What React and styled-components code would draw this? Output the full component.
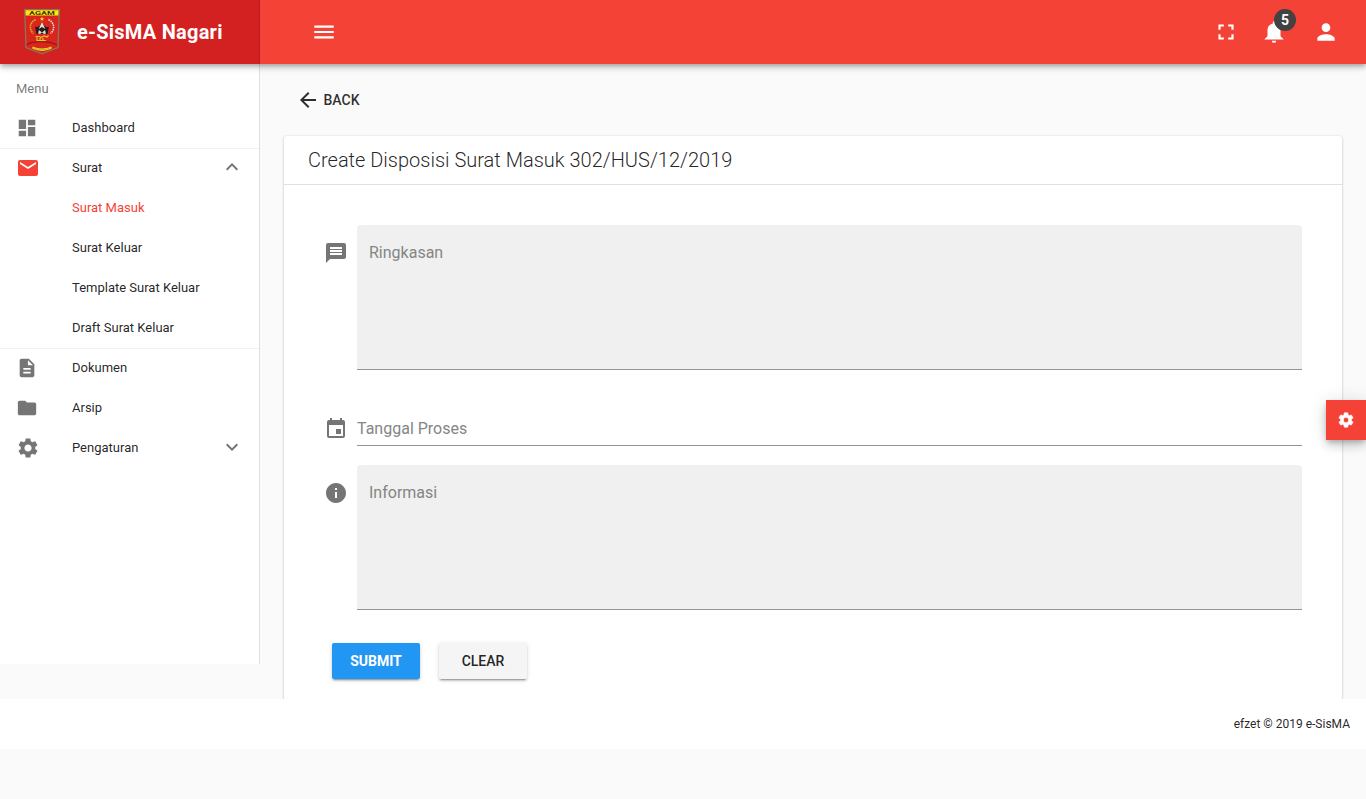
import React from "react";
import styled, { createGlobalStyle, css } from "styled-components";
import {
  MdArrowBack,
  MdDashboard,
  MdDescription,
  MdEmail,
  MdEvent,
  MdExpandLess,
  MdExpandMore,
  MdFolder,
  MdFullscreen,
  MdInfo,
  MdMenu,
  MdMessage,
  MdPerson,
  MdSettings,
} from "react-icons/md";

const GlobalStyle = createGlobalStyle`
  *, *::before, *::after { box-sizing: border-box; }
  body {
    margin: 0;
    background: #fafafa;
    color: rgba(0, 0, 0, 0.87);
    font-family: Roboto, "Liberation Sans", sans-serif;
    font-size: 16px;
    line-height: 1.5;
    overflow: hidden;
  }
  button { font-family: inherit; border: 0; cursor: pointer; }
  svg { display: block; flex: none; }
`;

const Page = styled.div`
  display: flex;
  flex-direction: column;
  height: 799px;
`;

const Header = styled.header`
  position: relative;
  z-index: 2;
  display: flex;
  flex: none;
  height: 64px;
  background: #f44336;
  color: #fff;
  box-shadow: 0 2px 4px -1px rgba(0, 0, 0, 0.2), 0 4px 5px 0 rgba(0, 0, 0, 0.14),
    0 1px 10px 0 rgba(0, 0, 0, 0.12);
`;

const Brand = styled.div`
  display: flex;
  align-items: center;
  gap: 17px;
  width: 260px;
  padding-left: 24px;
  background: #d32020;
  border-right: 1px solid #bb1d1d;
`;

const BrandName = styled.div`
  font-size: 20px;
  font-weight: 700;
  letter-spacing: 0.0125em;
  line-height: 1;
`;

const Toolbar = styled.div`
  display: flex;
  flex: 1;
  align-items: center;
  padding: 0 27px 0 51px;
`;

const Actions = styled.div`
  display: flex;
  align-items: center;
  margin-left: auto;
`;

const IconButton = styled.button`
  position: relative;
  display: flex;
  padding: 0;
  margin-left: ${(p) => p.$gap || 0}px;
  background: none;
  color: inherit;
`;

const Badge = styled.span`
  position: absolute;
  top: -10px;
  right: -9px;
  width: 22px;
  height: 22px;
  border-radius: 50%;
  background: #424242;
  font-size: 14px;
  font-weight: 700;
  line-height: 22px;
  text-align: center;
`;

const Body = styled.div`
  display: flex;
  flex: none;
  align-items: flex-start;
  height: 635px;
  overflow: hidden;
`;

const Sidebar = styled.nav`
  flex: none;
  width: 260px;
  height: 600px;
  padding-top: 4px;
  background: #fff;
  border-right: 1px solid #e0e0e0;
`;

const MenuHeading = styled.div`
  height: 40px;
  padding-left: 16px;
  color: rgba(0, 0, 0, 0.54);
  font-size: 13px;
  line-height: 41px;
`;

const MenuItem = styled.a`
  display: flex;
  align-items: center;
  height: 40px;
  padding: 0 15px 0 16px;
  color: ${(p) => (p.$active ? "#f44336" : "rgba(0,0,0,0.87)")};
  font-size: 13px;
  ${(p) =>
    p.$divided &&
    css`
      box-shadow: inset 0 1px #f2f2f2;
    `}
`;

const MenuIcon = styled.span`
  width: 56px;
  color: ${(p) => (p.$active ? "#f44336" : "#757575")};
`;

const MenuLabel = styled.span`
  flex: 1;
  line-height: 20px;
`;

const Chevron = styled.span`
  padding-bottom: 2px;
  color: #757575;
`;

const Main = styled.main`
  flex: 1;
  padding: 18px 24px 0;
`;

const BackButton = styled.button`
  display: flex;
  align-items: center;
  gap: 3.5px;
  height: 36px;
  margin-bottom: 18px;
  padding: 0 12px;
  background: none;
  color: rgba(0, 0, 0, 0.82);
  font-size: 14px;
  font-weight: 500;
`;

const Card = styled.section`
  height: 620px;
  background: #fff;
  border-radius: 2px;
  box-shadow: 0 1px 3px rgba(0, 0, 0, 0.2), 0 0 1px rgba(0, 0, 0, 0.2);
`;

const CardTitle = styled.h1`
  height: 49px;
  margin: 0;
  padding-left: 24px;
  border-bottom: 1px solid #e0e0e0;
  font-size: 20px;
  font-weight: 300;
  line-height: 48px;
`;

const Form = styled.form`
  padding: 40px 40px 0;
`;

const Field = styled.div`
  display: flex;
  align-items: flex-start;
  margin-bottom: ${(p) => p.$after}px;
`;

const FieldIcon = styled.span`
  width: 33px;
  padding-top: ${(p) => p.$top}px;
  color: #757575;
`;

const FieldBox = styled.div`
  flex: 1;
  border-bottom: 1px solid #949494;
  color: #858585;
  font-size: 16px;
  line-height: 24px;
  ${(p) =>
    p.$filled
      ? css`
          height: 145px;
          padding: 16px 12px;
          background: #f0f0f0;
          border-radius: 4px 4px 0 0;
        `
      : css`
          height: 29px;
        `}
`;

const FormActions = styled.div`
  display: flex;
  gap: 19px;
  padding-left: 8px;
`;

const FormButton = styled.button`
  width: 88px;
  height: 36px;
  padding: 0;
  border-radius: 2px;
  background: ${(p) => (p.$primary ? "#2196f3" : "#f5f5f5")};
  color: ${(p) => (p.$primary ? "#fff" : "rgba(0,0,0,0.87)")};
  font-size: 14px;
  font-weight: ${(p) => (p.$primary ? 700 : 500)};
  box-shadow: 0 3px 1px -2px rgba(0, 0, 0, 0.2), 0 2px 2px 0 rgba(0, 0, 0, 0.14),
    0 1px 5px 0 rgba(0, 0, 0, 0.12);
`;

const SettingsTab = styled.button`
  position: fixed;
  z-index: 3;
  top: 400px;
  right: 0;
  display: flex;
  align-items: center;
  justify-content: center;
  width: 40px;
  height: 40px;
  padding: 0;
  background: #f44336;
  color: #fff;
  box-shadow: 0 3px 5px -1px rgba(0, 0, 0, 0.2), 0 6px 10px 0 rgba(0, 0, 0, 0.14),
    0 1px 18px 0 rgba(0, 0, 0, 0.12);

  path:last-child {
    stroke: currentColor;
    stroke-width: 0.9;
  }
`;

const Footer = styled.footer`
  flex: none;
  height: 50px;
  padding-right: 16px;
  background: #fff;
  font-size: 12px;
  line-height: 50px;
  text-align: right;
`;

function Bell() {
  return (
    <svg width="26" height="26" viewBox="0 0 24 24" fill="currentColor">
      <path d="M14 20a2 2 0 0 1-4 0h4M12 2a1 1 0 0 1 1 1v1.080C15.840 4.560 18 7.030 18 10v6l3 3H3l3-3v-6c0-2.970 2.160-5.440 5-5.920V3a1 1 0 0 1 1-1z" />
    </svg>
  );
}

function Emblem() {
  return (
    <svg width="36" height="46" viewBox="0 0 36 46">
      <path d="M.7.7h34.6L34 38.5l-16 6.3L2 38.5z" fill="#da251d" stroke="#85765d" strokeWidth="1.3" />
      <path d="M1.4 1.2h33.2l-.3 5.2H1.7z" fill="#f4ec16" />
      <text x="18" y="6.1" fontSize="6" fontWeight="700" fill="#443a10" textAnchor="middle" textLength="26" lengthAdjust="spacingAndGlyphs">
        AGAM
      </text>
      <path d="m18 7.7.7 1.5 1.5.1-1.1 1 .3 1.5-1.4-.8-1.4.8.3-1.5-1.1-1 1.5-.1z" fill="#f4d918" />
      <path d="M11.500 10.500C5 14 5 21 9.500 24.500" fill="none" stroke="#d5b629" strokeWidth="1.600" strokeDasharray="1.500 .8" />
      <path d="M24.500 10.500C31 14 31 21 26.500 24.500" fill="none" stroke="#ddd" strokeWidth="1.600" strokeDasharray="1.500 .8" />
      <path d="M11 17.500c2.500 1.500 4.500.5 7-4 2.500 4.500 4.500 5.500 7 4l-1.500 7.500h-11z" fill="#251b1b" />
      <path d="m18 13-3.300 7 3.300-2 3.300 2z" fill="#e8dddd" />
      <path d="m14 24.500 1-3.500 3 2.500 3-2.500 1 3.500-2 .5-2-1.500-2 1.500z" fill="#ded4d4" />
      <path d="M11.500 27.500h4l1.500 1 3-1.500 3 1 1.500-1.500M13 28v3.500h9M16 29v3M19 29v3" fill="none" stroke="#dfc521" strokeWidth="1.200" />
      <path d="M3 36q3-3.500 7-2.500 5-1.500 9-.5 6-1 14 3" fill="none" stroke="#971713" strokeWidth="1.200" />
      <path d="M8.500 37.500q9.500 4 19 0v2.300q-9.500 4.200-19 0z" fill="#efdb24" />
      <path d="M10.500 39.300q7.500 2.600 15 0" fill="none" stroke="#a28c22" strokeWidth=".8" strokeDasharray="1.200 .8" />
    </svg>
  );
}

const menu = [
  { label: "Dashboard", Icon: MdDashboard },
  { label: "Surat", Icon: MdEmail, size: 24, activeIcon: true, divided: true, Arrow: MdExpandLess },
  { label: "Surat Masuk", active: true },
  { label: "Surat Keluar" },
  { label: "Template Surat Keluar" },
  { label: "Draft Surat Keluar" },
  { label: "Dokumen", Icon: MdDescription, divided: true },
  { label: "Arsip", Icon: MdFolder },
  { label: "Pengaturan", Icon: MdSettings, size: 24, Arrow: MdExpandMore },
];

export default function App() {
  return (
    <Page>
      <GlobalStyle />
      <Header>
        <Brand>
          <Emblem />
          <BrandName>e-SisMA Nagari</BrandName>
        </Brand>
        <Toolbar>
          <IconButton aria-label="Menu"><MdMenu size={26} /></IconButton>
          <Actions>
            <IconButton aria-label="Fullscreen"><MdFullscreen size={26} /></IconButton>
            <IconButton aria-label="Notifications" $gap={22}>
              <Bell />
              <Badge>5</Badge>
            </IconButton>
            <IconButton aria-label="Account" $gap={26}><MdPerson size={26} /></IconButton>
          </Actions>
        </Toolbar>
      </Header>
      <Body>
        <Sidebar>
          <MenuHeading>Menu</MenuHeading>
          {menu.map(({ label, Icon, size = 22, active, activeIcon, divided, Arrow }) => (
            <MenuItem key={label} $active={active} $divided={divided}>
              <MenuIcon $active={activeIcon}>{Icon && <Icon size={size} />}</MenuIcon>
              <MenuLabel>{label}</MenuLabel>
              {Arrow && <Chevron><Arrow size={24} /></Chevron>}
            </MenuItem>
          ))}
        </Sidebar>
        <Main>
          <BackButton><MdArrowBack size={24} />BACK</BackButton>
          <Card>
            <CardTitle>Create Disposisi Surat Masuk 302/HUS/12/2019</CardTitle>
            <Form>
              <Field $after={47}>
                <FieldIcon $top={16}><MdMessage size={24} /></FieldIcon>
                <FieldBox $filled>Ringkasan</FieldBox>
              </Field>
              <Field $after={19}>
                <FieldIcon $top={0}><MdEvent size={24} /></FieldIcon>
                <FieldBox>Tanggal Proses</FieldBox>
              </Field>
              <Field $after={33}>
                <FieldIcon $top={16}><MdInfo size={24} /></FieldIcon>
                <FieldBox $filled>Informasi</FieldBox>
              </Field>
              <FormActions>
                <FormButton type="button" $primary>SUBMIT</FormButton>
                <FormButton type="button">CLEAR</FormButton>
              </FormActions>
            </Form>
          </Card>
        </Main>
      </Body>
      <Footer>efzet © 2019 e-SisMA</Footer>
      <SettingsTab aria-label="Settings"><MdSettings size={18} /></SettingsTab>
    </Page>
  );
}
